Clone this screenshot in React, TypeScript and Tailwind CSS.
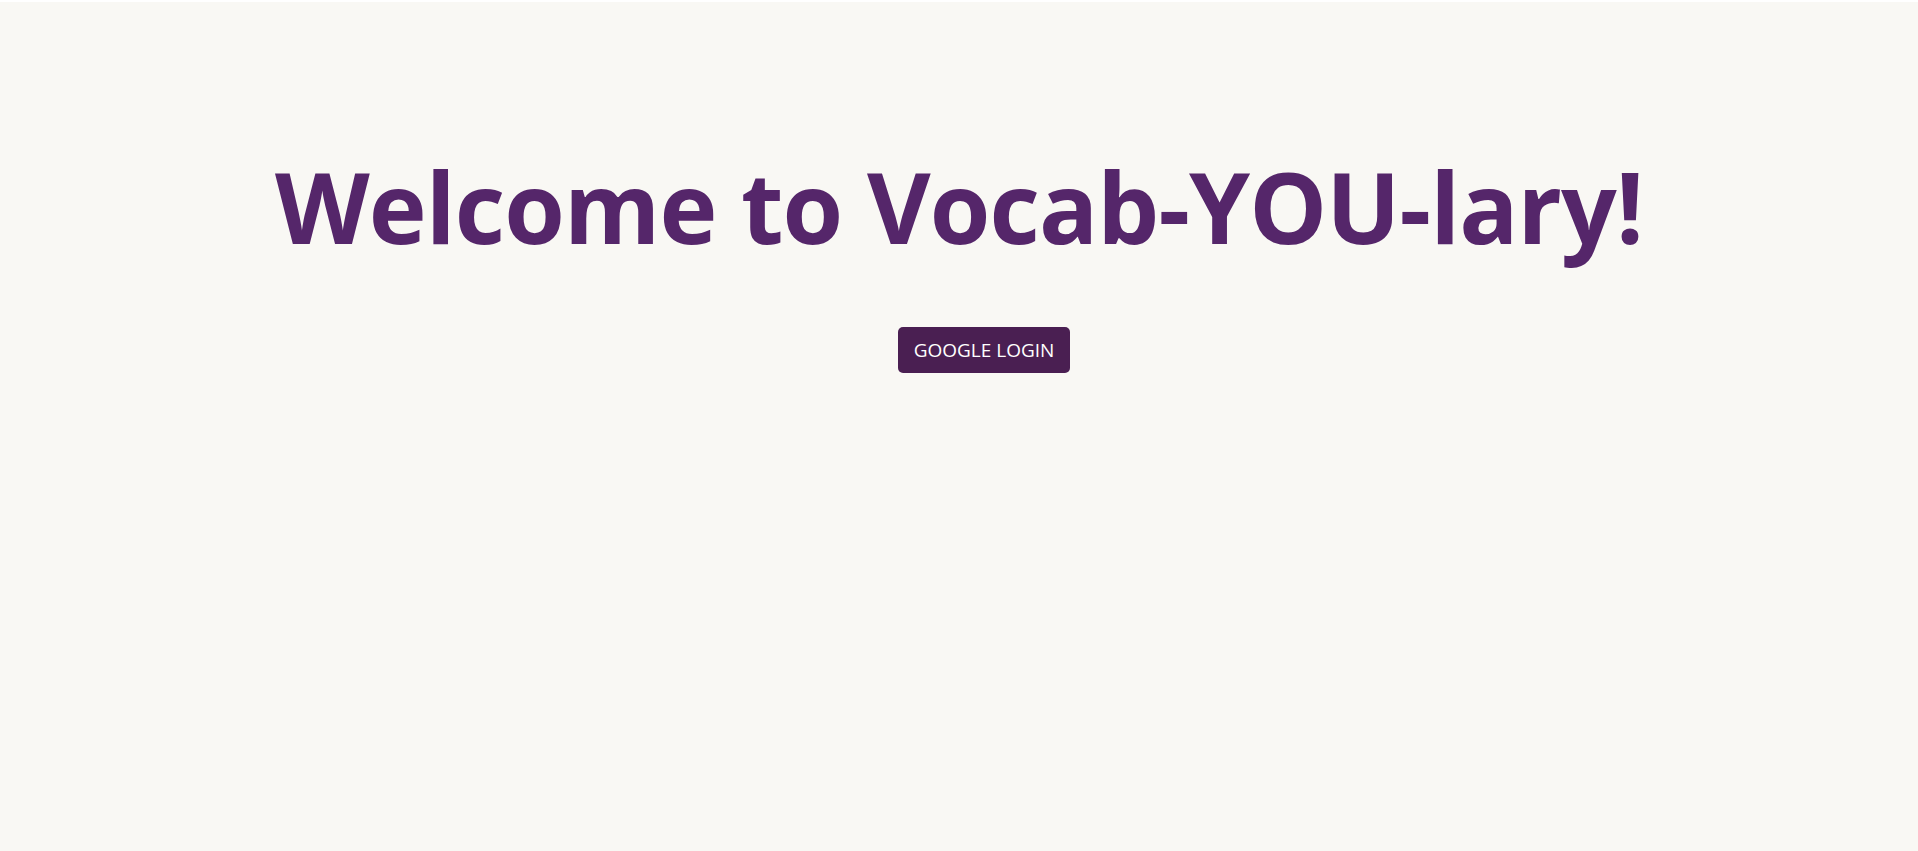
export default function App() {
    return (
        <div className="min-h-screen bg-white pt-[2px]">
            <div className="min-h-[849px] bg-[#f9f8f4] flex flex-col items-center pt-[144px]" style={{ fontFamily: '"Open Sans", "Noto Sans", sans-serif' }}>
                <h1 className="text-[98px] leading-[120px] font-bold tracking-[-0.9px] text-[#55266a] text-center">
                    Welcome to Vocab-YOU-lary!
                </h1>
                <button className="mt-[61px] ml-[50px] w-[172px] h-[46px] rounded-[5px] bg-[#4a1f52] text-white text-[19px]">
                    GOOGLE LOGIN
                </button>
            </div>
        </div>
    )
}
